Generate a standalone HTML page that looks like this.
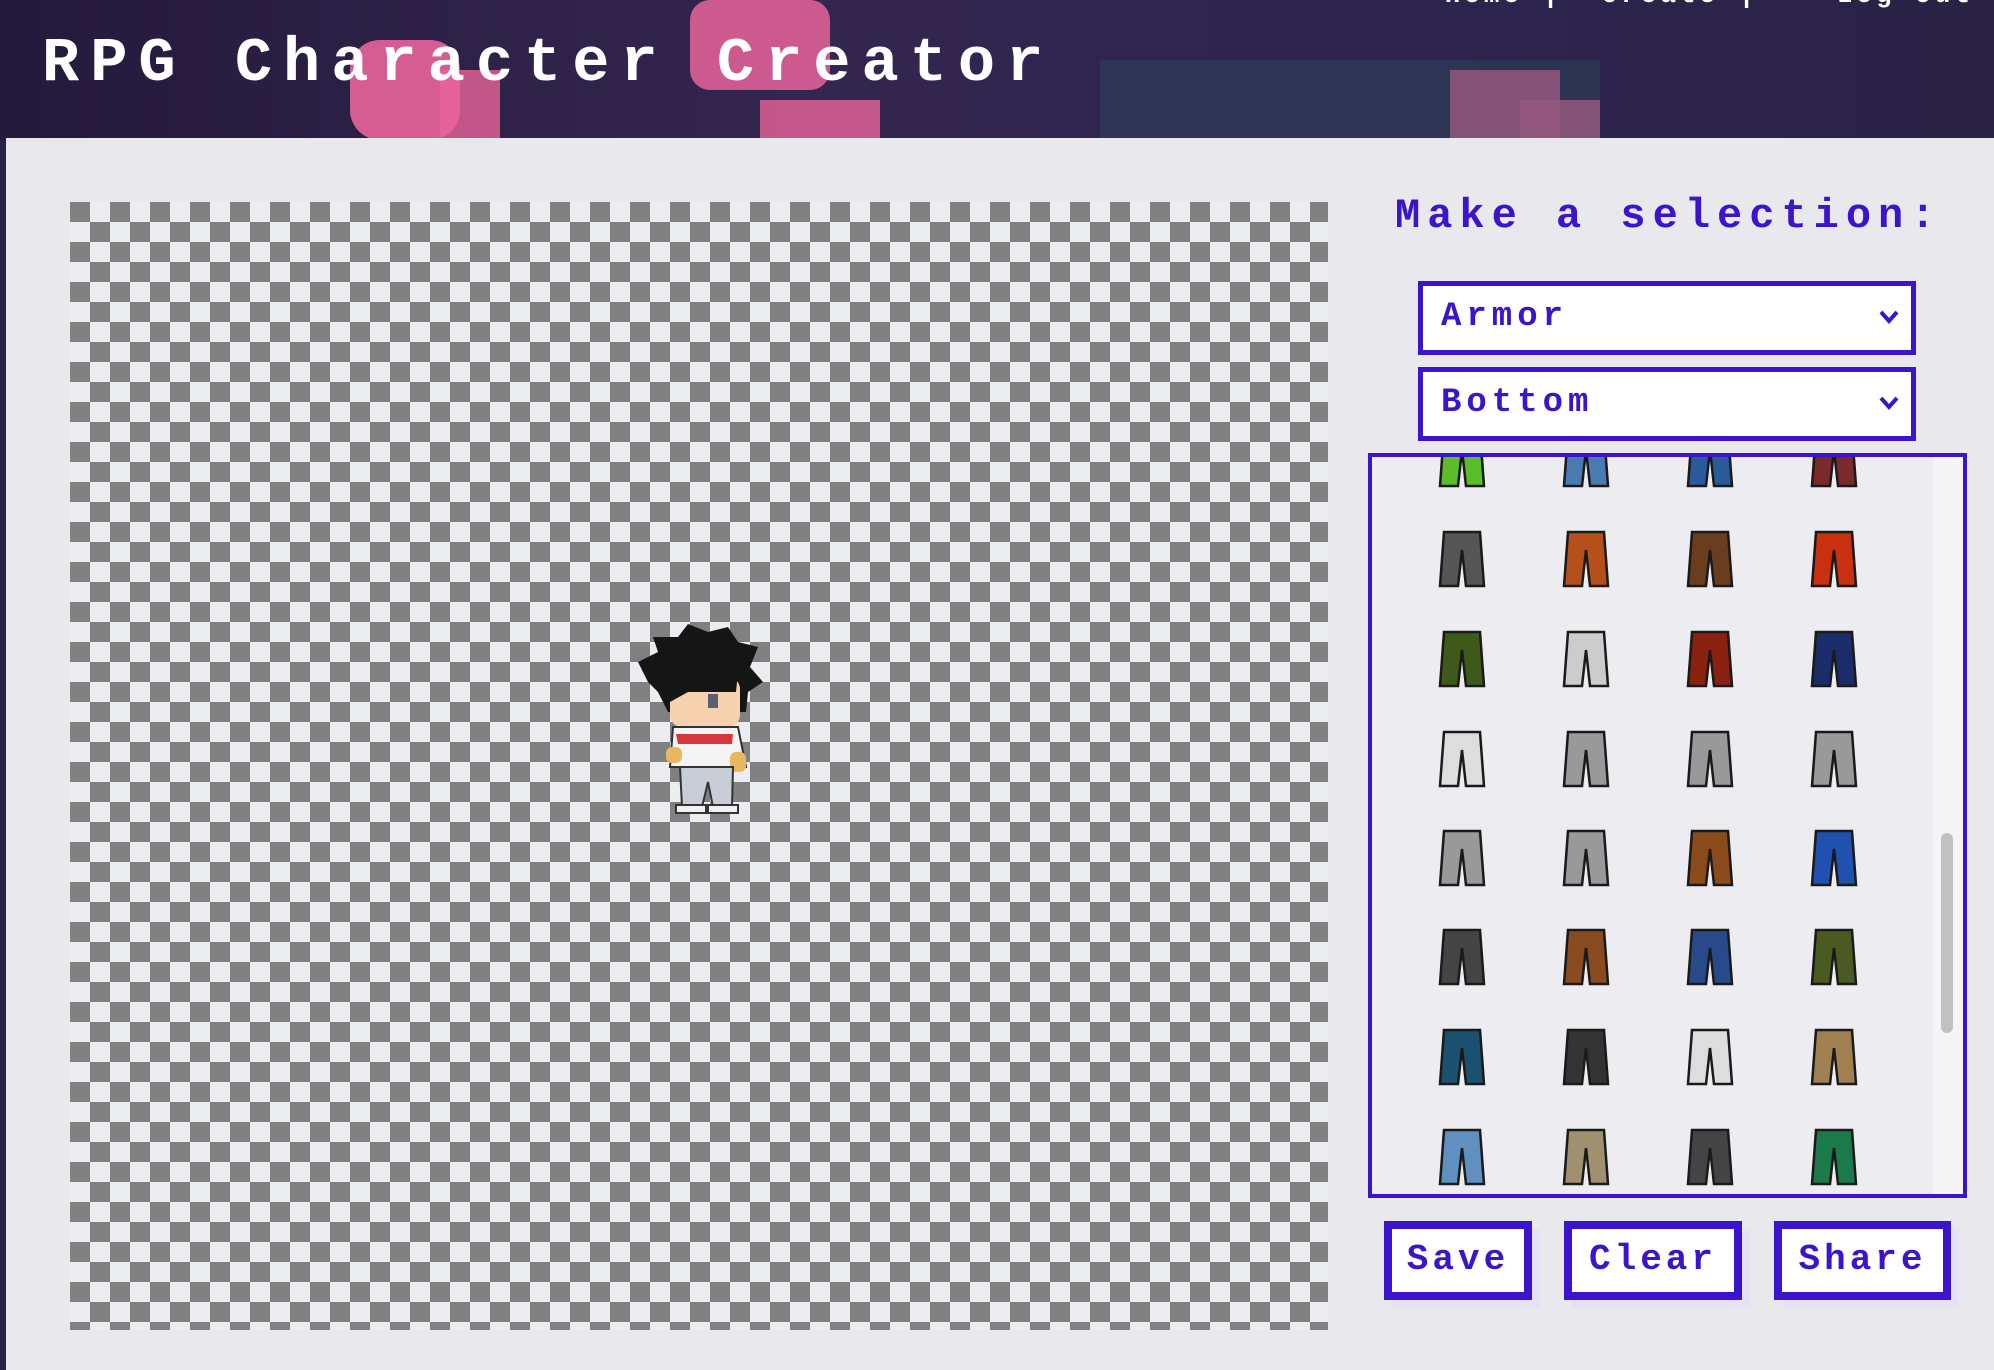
<!DOCTYPE html>
<html><head><meta charset="utf-8"><style>
*{margin:0;padding:0;box-sizing:border-box}
body{width:1994px;height:1370px;overflow:hidden;position:relative;background:#2a2146;font-family:"Liberation Mono",monospace}
.abs{position:absolute}
#hdr{left:0;top:0;width:1994px;height:140px;background:linear-gradient(90deg,#241a3c 0%,#33264f 40%,#2d2450 70%,#2a2244 100%)}
.pink{background:#e9649a;position:absolute}
#title{left:42px;top:28px;color:#fff;font-weight:bold;font-size:62px;letter-spacing:11px;white-space:nowrap}
#nav{right:20px;top:-20px;color:#fff;font-weight:bold;font-size:26px;letter-spacing:4px;white-space:pre}
#panel{left:6px;top:138px;width:1988px;height:1232px;background:#e9e9ed}
#chk{left:70px;top:202px;width:1258px;height:1128px;background-color:#ebedf0;
background-image:linear-gradient(45deg,#808080 25%,transparent 25%,transparent 75%,#808080 75%),linear-gradient(45deg,#808080 25%,transparent 25%,transparent 75%,#808080 75%);
background-size:40px 40px;background-position:20px 0,0 20px}
.pur{color:#3b14cc}
#mk{left:1395px;top:192px;font-weight:bold;font-size:42px;letter-spacing:7px;white-space:nowrap}
.sel{position:absolute;left:1418px;width:498px;height:74px;border:5px solid #3b14cc;background:#fff;color:#3b14cc;font-weight:bold;font-size:34px;letter-spacing:5px;padding:12px 0 0 18px}
.sel svg{position:absolute;right:12px;top:24px}
#grid{left:1368px;top:453px;width:599px;height:745px;border:4px solid #3b14cc;overflow:hidden;background:rgba(240,240,243,.6)}
#track{position:absolute;right:0;top:0;width:30px;height:100%;background:#f5f5f6}
#thumb{position:absolute;right:10px;top:376px;width:12px;height:200px;border-radius:6px;background:#c1c1c1}
.btn{position:absolute;top:1221px;height:79px;border:8px solid #3b14cc;background:#fff;color:#3b14cc;font-weight:bold;font-size:36px;letter-spacing:4px;text-align:center;line-height:62px;box-shadow:8px 8px 0 #e6e2f6}
</style></head><body>
<div id="hdr" class="abs">
 <div class="pink" style="left:350px;top:40px;width:110px;height:100px;border-radius:30px;opacity:.9"></div>
 <div class="pink" style="left:440px;top:70px;width:60px;height:70px;opacity:.8"></div>
 <div class="pink" style="left:690px;top:0;width:140px;height:90px;border-radius:20px;opacity:.85"></div>
 <div class="pink" style="left:760px;top:100px;width:120px;height:40px;opacity:.8"></div>
 <div class="pink" style="left:1450px;top:70px;width:110px;height:70px;opacity:.85"></div>
 <div class="pink" style="left:1520px;top:100px;width:80px;height:40px;opacity:.85"></div>
 <div class="abs" style="left:1100px;top:60px;width:500px;height:80px;background:#2e4a5c;opacity:.45"></div>
</div>
<div id="title" class="abs">RPG Character Creator</div>
<div id="nav" class="abs">Home |  Create |    Log Out</div>
<div id="panel" class="abs"></div>
<div id="chk" class="abs"></div>
<svg class="abs" style="left:628px;top:622px" width="150" height="200" viewBox="0 0 150 200">
 <path d="M20 60 L10 40 L30 30 L25 15 L50 15 L60 2 L80 10 L100 5 L110 20 L130 25 L122 45 L135 60 L120 70 L118 90 L40 90 L30 70 Z" fill="#151515"/>
 <rect x="42" y="55" width="70" height="50" rx="12" fill="#f6d2b0"/>
 <path d="M42 50 L75 42 L110 50 L108 70 L60 70 L42 80 Z" fill="#151515"/>
 <rect x="80" y="72" width="10" height="14" fill="#5a6070"/>
 <path d="M45 105 L110 105 L118 145 L42 145 Z" fill="#f4f4f4" stroke="#333" stroke-width="2"/>
 <path d="M48 112 L105 112 L104 122 L50 122 Z" fill="#d4383a"/>
 <rect x="38" y="125" width="16" height="16" rx="6" fill="#e8b860"/>
 <rect x="102" y="130" width="16" height="20" rx="6" fill="#e8b860"/>
 <path d="M52 145 L105 145 L104 185 L85 185 L80 160 L74 185 L54 185 Z" fill="#c9cdd6" stroke="#333" stroke-width="2"/>
 <rect x="48" y="183" width="30" height="8" fill="#f0f0f0" stroke="#333" stroke-width="2"/>
 <rect x="80" y="183" width="30" height="8" fill="#f0f0f0" stroke="#333" stroke-width="2"/>
</svg>
<div id="mk" class="abs pur">Make a selection:</div>
<div class="sel" style="top:281px">Armor<svg width="20" height="14" viewBox="0 0 20 14"><path d="M2 2 L10 11 L18 2" fill="none" stroke="#3b14cc" stroke-width="4"/></svg></div>
<div class="sel" style="top:367px">Bottom<svg width="20" height="14" viewBox="0 0 20 14"><path d="M2 2 L10 11 L18 2" fill="none" stroke="#3b14cc" stroke-width="4"/></svg></div>
<div id="grid" class="abs">
 <div id="track"><div id="thumb"></div></div>
 <svg width="560" height="760" style="position:absolute;left:0;top:0">
  <defs><path id="p" d="M6 2 H42 L46 56 H28 L24 20 L20 56 H2 Z" stroke="#1a1a1a" stroke-width="2.5"/></defs>
  <g transform="translate(-4,-4)">
  <use href="#p" x="70" y="-23" fill="#5bbd2a"/><use href="#p" x="194" y="-23" fill="#4a7ab0"/><use href="#p" x="318" y="-23" fill="#2a5a9a"/><use href="#p" x="442" y="-23" fill="#7a2a2a"/>
  <use href="#p" x="70" y="77" fill="#555"/><use href="#p" x="194" y="77" fill="#b5501a"/><use href="#p" x="318" y="77" fill="#6b3d1f"/><use href="#p" x="442" y="77" fill="#c8300f"/>
  <use href="#p" x="70" y="177" fill="#3d5a1a"/><use href="#p" x="194" y="177" fill="#ccc"/><use href="#p" x="318" y="177" fill="#8a2010"/><use href="#p" x="442" y="177" fill="#1a2d6a"/>
  <use href="#p" x="70" y="277" fill="#ddd"/><use href="#p" x="194" y="277" fill="#999"/><use href="#p" x="318" y="277" fill="#999"/><use href="#p" x="442" y="277" fill="#999"/>
  <use href="#p" x="70" y="376" fill="#999"/><use href="#p" x="194" y="376" fill="#999"/><use href="#p" x="318" y="376" fill="#8a4a1a"/><use href="#p" x="442" y="376" fill="#2050b0"/>
  <use href="#p" x="70" y="475" fill="#444"/><use href="#p" x="194" y="475" fill="#8a4a20"/><use href="#p" x="318" y="475" fill="#284a8a"/><use href="#p" x="442" y="475" fill="#4a5a20"/>
  <use href="#p" x="70" y="575" fill="#1a5070"/><use href="#p" x="194" y="575" fill="#333"/><use href="#p" x="318" y="575" fill="#ddd"/><use href="#p" x="442" y="575" fill="#a08050"/>
  <use href="#p" x="70" y="675" fill="#6090c0"/><use href="#p" x="194" y="675" fill="#a09070"/><use href="#p" x="318" y="675" fill="#444"/><use href="#p" x="442" y="675" fill="#1a7a4a"/>
  </g>
 </svg>
</div>
<div class="btn" style="left:1384px;width:148px">Save</div>
<div class="btn" style="left:1564px;width:178px">Clear</div>
<div class="btn" style="left:1774px;width:177px">Share</div>
</body></html>
